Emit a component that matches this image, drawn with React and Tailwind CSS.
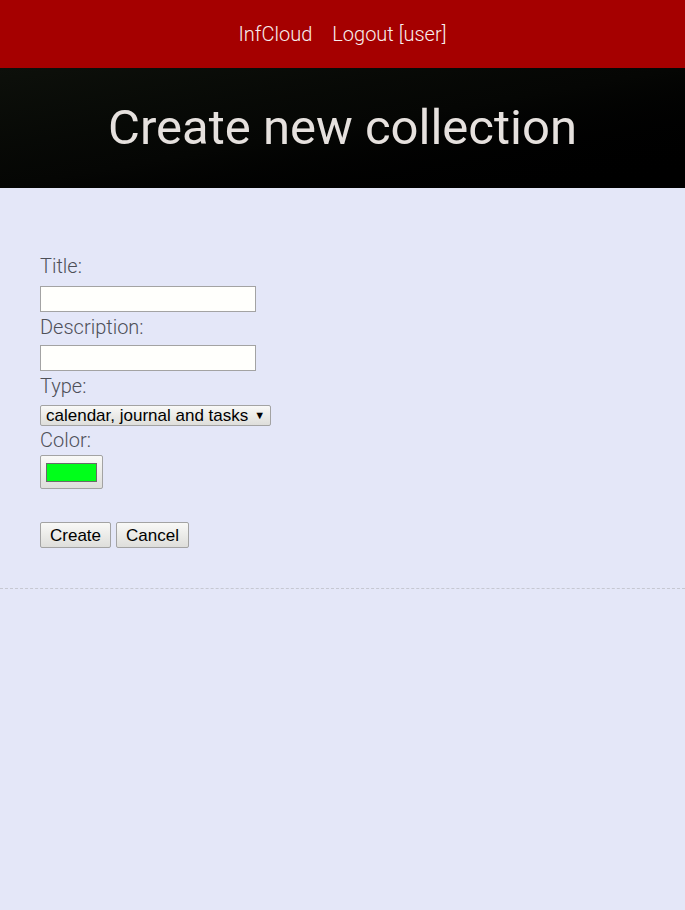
import React from 'react';

function Field({ label, children, lh = 'leading-[30px]' }) {
  return (
    <div className="flex flex-col items-start">
      <label className={`text-[20px] ${lh} font-light text-[#4e5058] [font-family:Roboto,sans-serif]`}>{label}</label>
      {children}
    </div>
  );
}

const btn =
  'border border-[#a3a3a3] rounded-[2px] bg-gradient-to-b from-[#f9f9f7] to-[#dededb] text-black text-[17px] [font-family:"Liberation_Sans",Arial,sans-serif]';

export default function App() {
  return (
    <div className="min-h-[910px] bg-[#e4e7f8]">
      <header className="h-[68px] bg-[#a50000] flex items-center justify-center gap-5 text-[20px] font-light text-[#f8eeee] [font-family:Roboto,sans-serif]">
        <a>InfCloud</a>
        <a>Logout [user]</a>
      </header>
      <div className="h-[120px] bg-gradient-to-br from-[#0d100b] via-[#050604] to-black flex items-center justify-center">
        <h1 className="text-[49px] font-normal text-[#e6e1de] [font-family:Roboto,sans-serif]">
          Create new collection
        </h1>
      </div>
      <main className="px-10 pt-[63px]">
        <form className="flex flex-col">
          <Field label="Title:">
            <input type="text" className="mt-[5px] w-[216px] h-[26px] bg-[#fffffc] border border-[#a3a3a3] outline-none" />
          </Field>
          <Field label="Description:">
            <input type="text" className="mt-[3px] w-[216px] h-[26px] bg-[#fffffc] border border-[#a3a3a3] outline-none" />
          </Field>
          <Field label="Type:">
            <button type="button" className={`${btn} mt-[4px] h-[21px] w-[231px] flex items-center pl-[5px] gap-[6px] leading-none`}>
              <span>calendar, journal and tasks</span>
              <span className="text-[11px]">▼</span>
            </button>
          </Field>
          <Field label="Color:" lh="leading-[29px]">
            <button type="button" className={`${btn} w-[63px] h-[34px] flex items-center justify-center`}>
              <span className="block w-[51px] h-[19px] bg-[#00ff1a] border border-[#6a6a6a]" />
            </button>
          </Field>
          <div className="flex gap-[5px] mt-[33px]">
            <button type="button" className={`${btn} w-[71px] h-[26px]`}>Create</button>
            <button type="button" className={`${btn} w-[73px] h-[26px]`}>Cancel</button>
          </div>
        </form>
      </main>
      <div className="mt-10 border-t border-dashed border-[#c6c8d2]" />
    </div>
  );
}
